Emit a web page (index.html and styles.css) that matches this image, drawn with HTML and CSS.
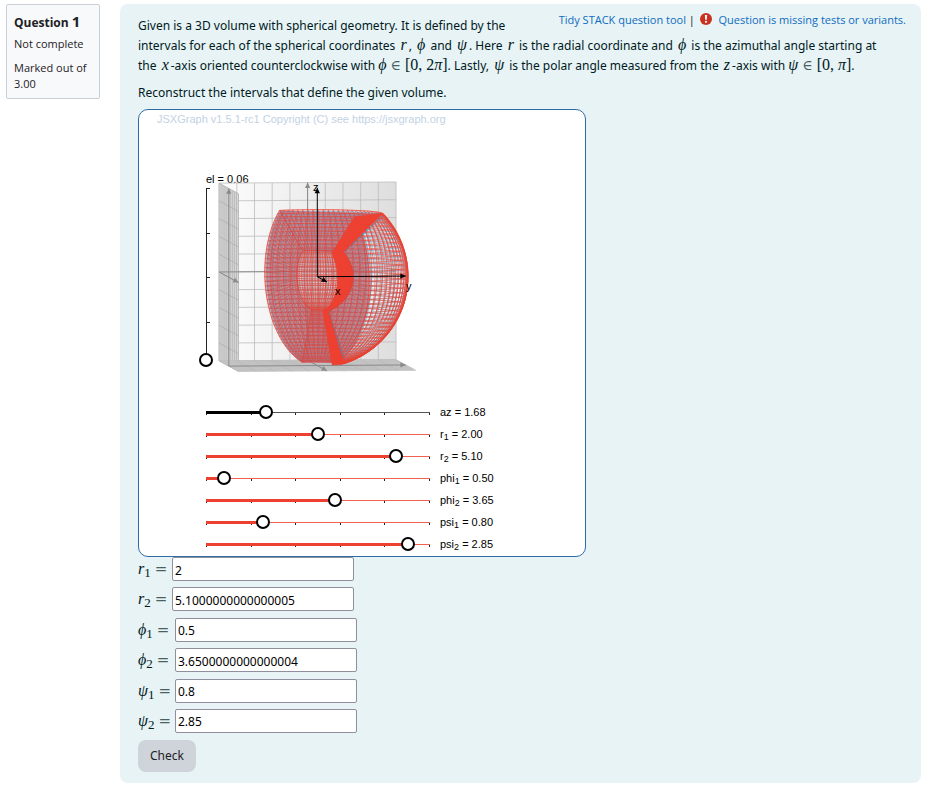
FILE: index.html
```html
<!DOCTYPE html>
<html lang="en">
<head>
<meta charset="utf-8">
<title>Question 1</title>
<link rel="stylesheet" href="styles.css">
</head>
<body>
<main class="question">
  <aside class="info">
    <h3 class="info-title">Question <span class="info-number">1</span></h3>
    <p class="info-state">Not complete</p>
    <p class="info-grade">Marked out of 3.00</p>
  </aside>
  <form class="content">
    <nav class="tools">
      <a href="#tidy">Tidy STACK question tool</a> |
      <svg class="alert" viewBox="0 0 12 12" aria-hidden="true"><circle cx="6" cy="6" r="6" fill="#ca3120"/><path d="M4.900 2h2.200l-.3 4.800H5.200z" fill="#fff"/><circle cx="6" cy="8.800" r="1.100" fill="#fff"/></svg>
      <a href="#tests">Question is missing tests or variants.</a>
    </nav>
    <p class="text">Given is a 3D volume with spherical geometry. It is defined by the<br>intervals for each of the spherical coordinates <i class="m">r</i>, <i class="m">ϕ</i> and <i class="m">ψ</i>. Here <i class="m">r</i> is the radial coordinate and <i class="m">ϕ</i> is the azimuthal angle starting at<br>the <i class="m">x</i>-axis oriented counterclockwise with <span class="m"><i>ϕ</i> <span class="op">∈</span> [0, 2<i>π</i>]</span>. Lastly, <i class="m">ψ</i> is the polar angle measured from the <i class="m">z</i>-axis with <span class="m"><i>ψ</i> <span class="op">∈</span> [0, <i>π</i>]</span>.</p>
    <p class="text">Reconstruct the intervals that define the given volume.</p>
    <section class="board">
      <p class="copyright">JSXGraph v1.5.1-rc1 Copyright (C) see https://jsxgraph.org</p>
      <div class="scene">
        <div class="elevation">
          <label for="el">el = 0.06</label>
          <input id="el" class="upright" type="range" min="0" max="6.28" step="0.01" value="0">
        </div>
        <svg id="view" class="view" viewBox="217 176 203 200" role="img" aria-label="Spherical volume"></svg>
      </div>
      <div class="sliders" id="sliders"></div>
    </section>
    <div class="answers">
      <div class="answer"><label class="m" for="a1"><i>r</i><sub>1</sub> <span class="op">=</span></label><input id="a1" type="text" value="2"></div>
      <div class="answer"><label class="m" for="a2"><i>r</i><sub>2</sub> <span class="op">=</span></label><input id="a2" type="text" value="5.1000000000000005"></div>
      <div class="answer greek"><label class="m" for="a3"><i>ϕ</i><sub>1</sub> <span class="op">=</span></label><input id="a3" type="text" value="0.5"></div>
      <div class="answer greek"><label class="m" for="a4"><i>ϕ</i><sub>2</sub> <span class="op">=</span></label><input id="a4" type="text" value="3.6500000000000004"></div>
      <div class="answer greek"><label class="m" for="a5"><i>ψ</i><sub>1</sub> <span class="op">=</span></label><input id="a5" type="text" value="0.8"></div>
      <div class="answer greek"><label class="m" for="a6"><i>ψ</i><sub>2</sub> <span class="op">=</span></label><input id="a6" type="text" value="2.85"></div>
    </div>
    <button class="check" type="button">Check</button>
  </form>
</main>
<script src="script.js"></script>
</body>
</html>
```
FILE: styles.css
```css
* { box-sizing: border-box; }
body {
  margin: 0;
  background: #fff;
  color: #1d2125;
  font: 12px/20px "Noto Sans", sans-serif;
}
p, h3 { margin: 0; }
.question {
  display: flex;
  align-items: flex-start;
  gap: 20px;
  padding: 4px 6px;
}
.info {
  flex: 0 0 94px;
  padding: 8px 7px 6px;
  border: 1px solid #cad0d7;
  border-radius: 2px;
  background: #f8f9fa;
  font: 11px/16px "Open Sans", sans-serif;
}
.info-title { font-size: 12px; line-height: 17px; font-weight: 700; }
.info-number { font-size: 15px; }
.info-state { margin: 5px 0 8px; }
.content {
  flex: 1;
  min-width: 0;
  padding: 12px 15px 11px 18px;
  border-radius: 8px;
  background: #e7f3f5;
  color: #001a1e;
}
.tools {
  float: right;
  margin-top: -6px;
  font: 11px/20px "Open Sans", sans-serif;
}
.tools a { color: #0f6cbf; text-decoration: none; }
.alert { width: 12px; height: 12px; margin: 0 4px 0 2px; vertical-align: -1px; }
.text { margin-bottom: 7px; }
.m { font-family: "Liberation Serif", "DejaVu Serif", serif; font-size: 16px; line-height: 16px; }
i.m { padding: 0 2px; }
.op { color: #4a5f62; font-family: "DejaVu Serif", serif; font-size: 14px; }
.board {
  width: 448px;
  max-width: 100%;
  height: 448px;
  margin-top: -1px;
  border: 1px solid #2d6ca8;
  border-radius: 10px;
  background: #fff;
  font: 11px/14px "Liberation Sans", sans-serif;
  color: #000;
}
.copyright { padding: 2px 0 0 18px; color: #c3d2e4; }
.scene {
  display: flex;
  padding: 50px 0 0 60px;
}
.elevation {
  width: 18px;
}
.elevation label { display: block; margin: -4px 0 -5px 7px; white-space: nowrap; }
.view { width: 203px; height: 200px; overflow: visible; }
.sliders {
  display: grid;
  grid-template-rows: repeat(7, 22px);
  margin-top: 25px;
  padding-left: 60px;
}
.slider { display: flex; align-items: center; gap: 4px; }
.slider sub { font-size: 9px; line-height: 0; vertical-align: -2px; }
input[type="range"] {
  appearance: none;
  margin: 0;
  outline: none;
  background: none;
}
.slider input {
  --line: #ee4030;
  --thin: #f2604f;
  width: 237px;
  height: 14px;
}
.slider .dark { --line: #000; --thin: #555; }
.slider input::-webkit-slider-runnable-track {
  height: 14px;
  background:
    linear-gradient(var(--line), var(--line)) 7px 6px / calc(var(--v) * 223px) 3px no-repeat,
    linear-gradient(var(--thin), var(--thin)) 7px 7px / 224px 1px no-repeat,
    repeating-linear-gradient(90deg, #222 0 1px, transparent 1px 44.6px) 7px 7px / 224px 3px no-repeat;
}
input[type="range"]::-webkit-slider-thumb {
  appearance: none;
  width: 14px;
  height: 14px;
  border: 2px solid #000;
  border-radius: 50%;
  background: #fff;
}
.upright {
  display: block;
  writing-mode: vertical-lr;
  direction: rtl;
  width: 14px;
  height: 186px;
}
.upright::-webkit-slider-runnable-track {
  width: 14px;
  background:
    linear-gradient(#222, #222) 7px 7px / 1px 172px no-repeat,
    repeating-linear-gradient(#222 0 1px, transparent 1px 44.6px) 7px 7px / 4px 172px no-repeat;
}
.answers { display: grid; align-content: space-between; min-height: 176px; }
.answer { display: flex; align-items: center; }
.answer label { width: 34px; white-space: nowrap; }
.answer.greek label { width: 37px; }
.answer sub { font-size: 13px; line-height: 0; vertical-align: -3px; }
.answer .op { font-size: 15px; }
.answer input {
  width: 182px;
  height: 24px;
  padding: 2px 2px 0;
  border: 1px solid #8f8f9d;
  border-radius: 2px;
  background: #fff;
  color: #000;
  font: 12px/18px "Noto Sans", sans-serif;
}
.check {
  display: block;
  height: 32px;
  margin-top: 7px;
  padding: 0 12px;
  border: 0;
  border-radius: 8px;
  background: #ced4da;
  color: #1d2125;
  font: 12px/20px "Noto Sans", sans-serif;
}
```
FILE: script.js
```js
const AZ = 1.68, EL = 0.06, UNIT = 17.8, ORIGIN = [317.3, 276.7];
const R = [2, 5.1], PHI = [0.5, 3.65], PSI = [0.8, 2.85];
const view = document.getElementById('view');

// Parallel projection of a point in space to the drawing.
function project(x, y, z) {
  const c = -Math.cos(AZ), s = Math.sin(AZ);
  return [ORIGIN[0] + UNIT * (c * x + s * y),
          ORIGIN[1] - UNIT * z * Math.cos(EL) + UNIT * Math.sin(EL) * (s * x - c * y)];
}
function sphere(r, phi, psi) {
  return project(r * Math.sin(psi) * Math.cos(phi), r * Math.sin(psi) * Math.sin(phi), r * Math.cos(psi));
}
function path(points) {
  return 'M' + points.map(p => p[0].toFixed(2) + ' ' + p[1].toFixed(2)).join('L');
}
function draw(d, attrs) {
  const el = document.createElementNS('http://www.w3.org/2000/svg', 'path');
  el.setAttribute('d', d);
  for (const k in attrs) el.setAttribute(k, attrs[k]);
  view.appendChild(el);
}
function range(a, b, n) {
  return Array.from({ length: n + 1 }, (_, i) => a + (b - a) * i / n);
}
function arrow(a, b, color, width) {
  draw(path([a, b]), { stroke: color, 'stroke-width': width, fill: 'none' });
  const t = Math.atan2(b[1] - a[1], b[0] - a[0]);
  const wing = k => [b[0] - 6 * Math.cos(t + k), b[1] - 6 * Math.sin(t + k)];
  draw(path([b, wing(0.45), wing(-0.45)]) + 'Z', { fill: color });
}
function label(x, y, s) {
  const el = document.createElementNS('http://www.w3.org/2000/svg', 'text');
  el.setAttribute('x', x);
  el.setAttribute('y', y);
  el.textContent = s;
  view.appendChild(el);
}

// Walls of the box, with their unit grids.
view.innerHTML = '<defs><linearGradient id="wall"><stop offset="0.1" stop-color="#fafafa"/><stop offset="1" stop-color="#dedede"/></linearGradient></defs>';
const walls = [
  { fill: 'url(#wall)', grid: '#bdbdbd', at: (u, v) => project(-5, u, v) },
  { fill: '#dadada', grid: '#b0b0b0', at: (u, v) => project(u, -5, v) },
  { fill: '#d2d2d2', grid: '#bababa', at: (u, v) => project(u, v, -5) }
];
for (const w of walls) {
  draw(path([w.at(-5, -5), w.at(5, -5), w.at(5, 5), w.at(-5, 5)]) + 'Z', { fill: w.fill });
  const d = range(-5, 5, 10).map(k => path([w.at(k, -5), w.at(k, 5)]) + path([w.at(-5, k), w.at(5, k)])).join('');
  draw(d, { stroke: w.grid, 'stroke-width': 0.8, fill: 'none' });
}
const grey = '#8a8a8a';
arrow(project(-5, 0, -5), project(-5, 0, 5), grey, 1);
arrow(project(-5, -5, 0), project(-5, 5, 0), grey, 1);
arrow(project(0, -5, -5), project(0, -5, 5), grey, 1);
arrow(project(-5, -5, 0), project(5, -5, 0), grey, 1);
arrow(project(0, -5, -5), project(0, 5, -5), grey, 1);
arrow(project(-5, 0, -5), project(5, 0, -5), grey, 1);

// Shaded patches.
const HALF = Math.PI / 2, N = 40;
const psis = range(PSI[0], PSI[1], N), back = psis.slice().reverse();
const meridian = (r, phi, list) => list.map(p => sphere(r, phi, p));
const patch = (pts, fill, o) => draw(path(pts) + 'Z', { fill, 'fill-opacity': o });
const rim = range(PHI[0], PHI[1], N);
patch([...meridian(R[1], PHI[1], back), ...rim.slice().reverse().map(p => sphere(R[1], p, PSI[0])), ...meridian(R[1], HALF, psis)], '#fff', 0.35);

// Wire mesh of the six faces.
function mesh(f, a, b, n, m, color, o, w) {
  const A = range(a[0], a[1], n), B = range(b[0], b[1], m);
  draw(A.map(u => path(B.map(v => f(u, v)))).join('') + B.map(v => path(A.map(u => f(u, v)))).join(''),
    { stroke: color, 'stroke-opacity': o, 'stroke-width': w, fill: 'none' });
}
const tint = '#a05060';
for (const [color, o, w, s] of [['#3a9bd0', 0.5, 0.7, 0.025], ['#ee4030', 0.72, 0.8, 0]]) {
  const phi = [PHI[0] + s, PHI[1] - s], psi = [PSI[0] + s, PSI[1] - s];
  mesh((u, v) => sphere(R[1], u, v), phi, psi, N, N, color, o, w);
  mesh((u, v) => sphere(R[0], u, v), phi, psi, N, N, color, o, w);
  for (const p of phi) patch([...meridian(R[1], p, psis), ...meridian(R[0], p, back)], tint, 0.34);
  for (const p of PSI) {
    patch([sphere(R[1], PHI[1], p), sphere(R[1], HALF, p), sphere(R[0], HALF, p), sphere(R[0], PHI[1], p)], tint, 0.34);
  }
  for (const p of phi) mesh((u, v) => sphere(u, p, v), R, psi, 12, N, color, o * 0.7, w);
  for (const p of psi) mesh((u, v) => sphere(u, v, p), R, phi, 12, N, color, o * 0.8, w);
}
const red = '#ee4030';
patch([...meridian(R[0], PHI[0], psis), ...meridian(R[0], HALF, back)], red, 0.95);
for (const p of PSI) {
  patch([sphere(R[0], PHI[0], p), sphere(R[1], PHI[0], p), sphere(R[1], HALF, p), sphere(R[0], HALF, p)], red, 0.95);
}
draw(path(meridian(R[1], HALF, psis)), { stroke: red, 'stroke-width': 2, 'stroke-opacity': 0.8, fill: 'none' });

// Axes through the origin.
arrow(ORIGIN, project(0, 0, 5), '#000', 1);
arrow(ORIGIN, project(0, 5, 0), '#000', 1);
arrow(ORIGIN, project(5, 0, 0), '#000', 1);
label(313, 191, 'z');
label(406, 290, 'y');
label(335, 295, 'x');

const data = [
  ['az', '', '1.68', 0.267], ['r', '1', '2.00', 0.5], ['r', '2', '5.10', 0.85], ['phi', '1', '0.50', 0.08],
  ['phi', '2', '3.65', 0.58], ['psi', '1', '0.80', 0.255], ['psi', '2', '2.85', 0.907]
];
document.getElementById('sliders').innerHTML = data.map(([name, sub, value, v]) => {
  const id = name + sub;
  return `<div class="slider"><input id="${id}" type="range" class="${sub ? '' : 'dark'}" min="0" max="1" step="0.001" value="${v}" style="--v:${v}">` +
    `<label for="${id}">${name}${sub ? `<sub>${sub}</sub>` : ''} = ${value}</label></div>`;
}).join('');
```
